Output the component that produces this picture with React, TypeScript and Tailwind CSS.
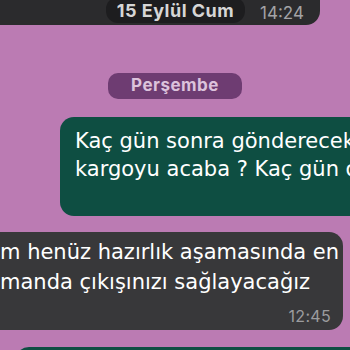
const App = () => {
  return (
    <div className="w-[350px] h-[350px] overflow-hidden bg-[#bb7bb3] flex flex-col font-['Inter','Liberation_Sans',sans-serif]">
      {/* quoted header bubble, cut at the top */}
      <div className="w-[320px] h-[25px] shrink-0 bg-[#2b2b2d] rounded-br-[14px] flex items-start">
        <div className="ml-[106px] mt-[-3px] h-[26px] w-[139px] rounded-[12px] bg-[#1d1d1f] flex items-center justify-center text-[18px] font-bold tracking-[0.5px] text-[#d6d6d6]">
          15 Eylül Cum
        </div>
        <span className="ml-[15px] mt-[1px] text-[17px] text-[#a3a3a6]">14:24</span>
      </div>

      {/* day separator */}
      <div className="self-center mt-[48px] h-[26px] w-[134px] shrink-0 rounded-[10px] bg-[#6e3c72] flex items-center justify-center text-[17px] font-bold tracking-[0.5px] text-[#dcc2dc]">
        Perşembe
      </div>

      {/* outgoing */}
      <div className="ml-[60px] mt-[18px] w-[330px] h-[99px] shrink-0 rounded-[14px] bg-[#0e4e42] pl-[15px] pt-[10px] font-['DejaVu_Sans',sans-serif] text-[21px] leading-[28px] text-white whitespace-nowrap">
        <p>Kaç gün sonra gönderecek</p>
        <p>kargoyu acaba ? Kaç gün olur</p>
      </div>

      {/* incoming */}
      <div className="mt-[16px] w-[343px] h-[98px] shrink-0 rounded-r-[14px] bg-[#38383a] flex flex-col text-white whitespace-nowrap">
        <div className="pt-[5px] font-['DejaVu_Sans',sans-serif] text-[21px] leading-[30px]">
          <p>m henüz hazırlık aşamasında en</p>
          <p>manda çıkışınızı sağlayacağız</p>
        </div>
        <span className="self-end mr-[12px] mt-[9px] text-[16px] leading-[20px] tracking-[0.3px] text-[#9c9c9f]">12:45</span>
      </div>

      {/* next outgoing, cut at the bottom */}
      <div className="ml-[15px] mt-[17px] w-[360px] h-[40px] shrink-0 rounded-[14px] bg-[#0e4e42]" />
    </div>
  );
};

export default App;
